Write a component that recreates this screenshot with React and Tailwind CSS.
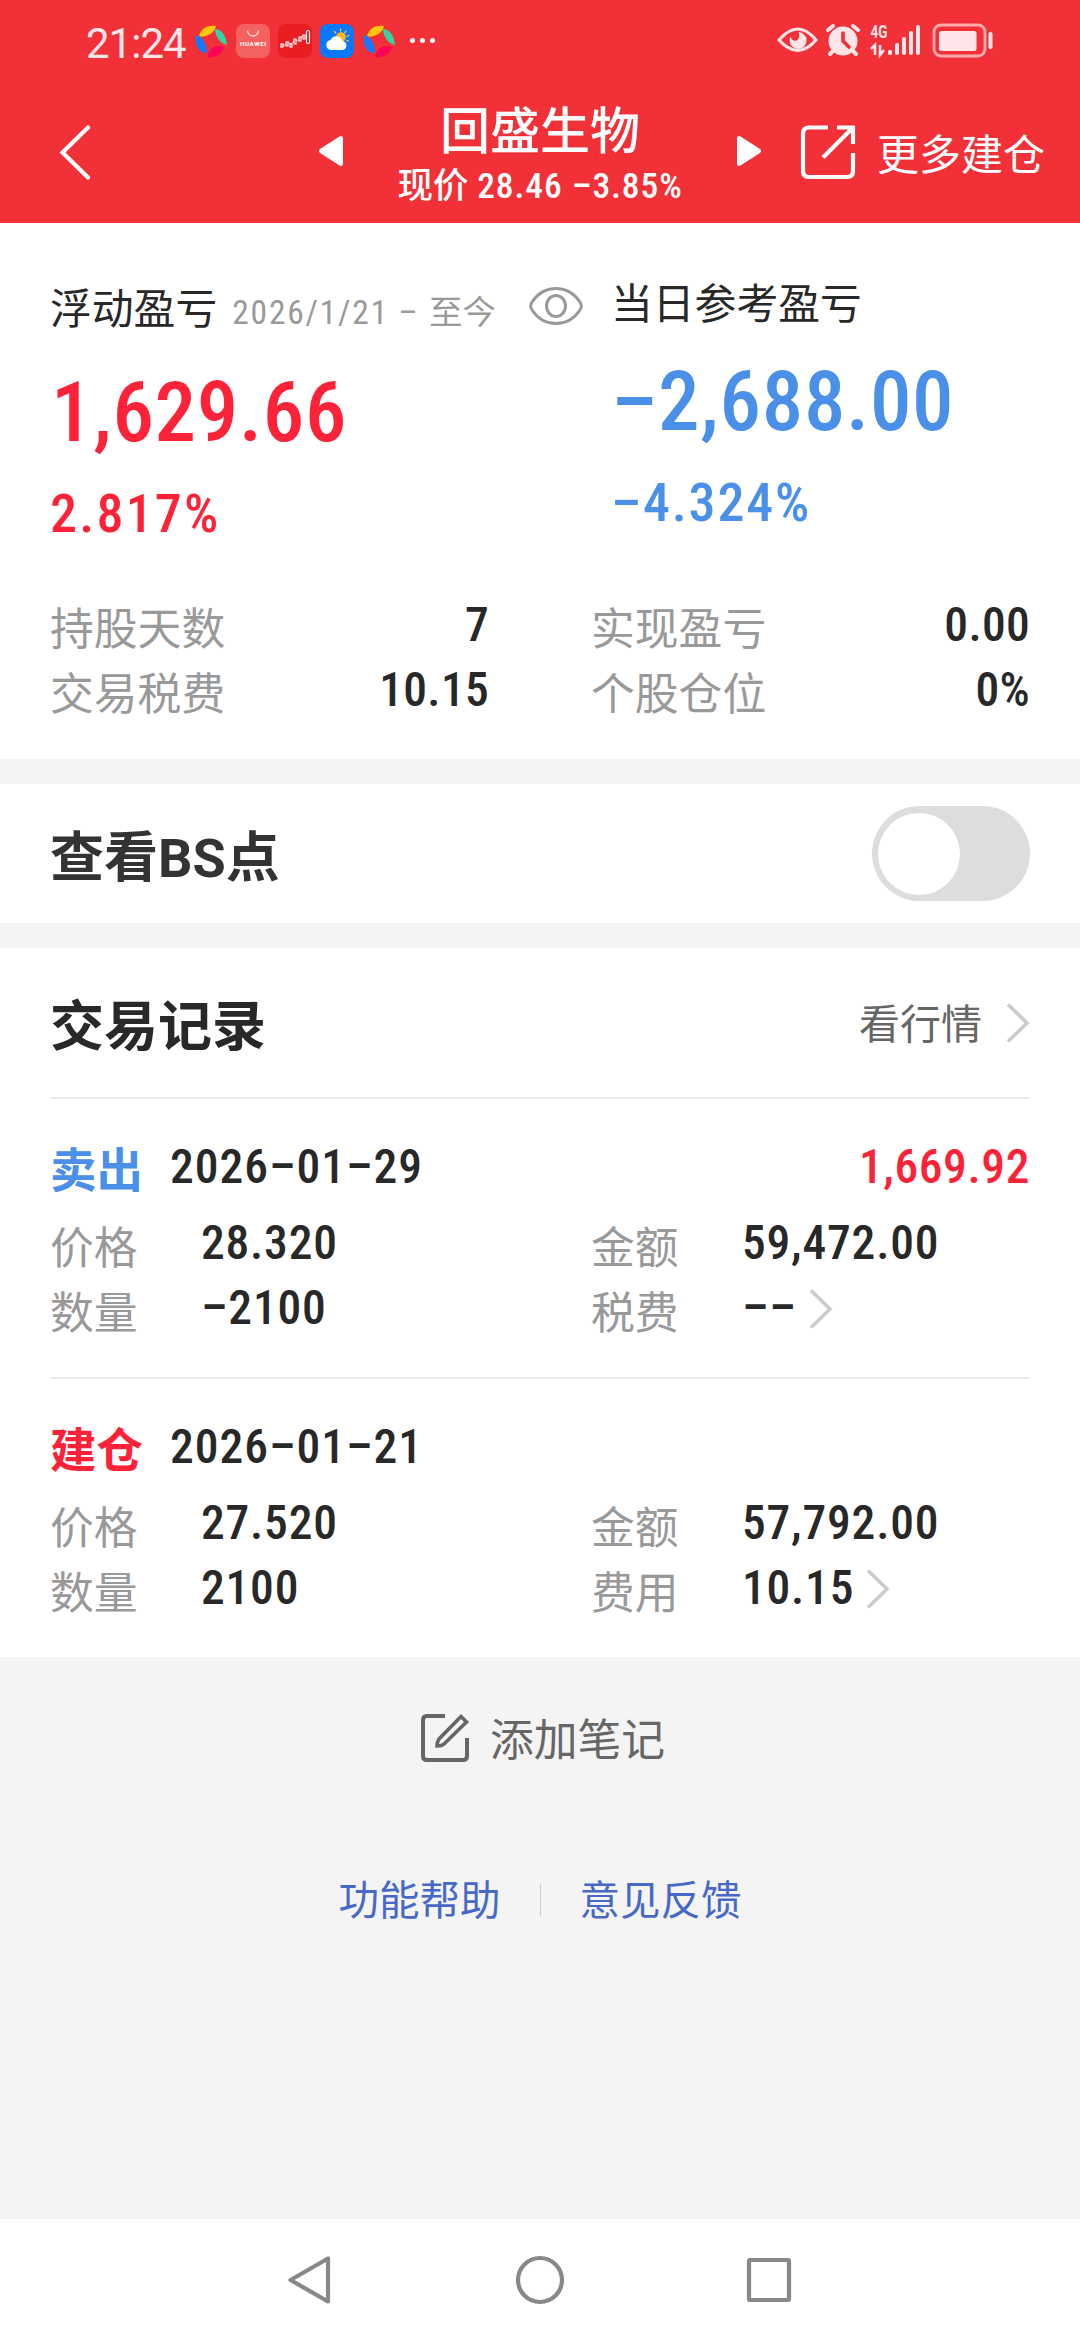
import clsx from 'clsx';

const records = [
    {
        id: 1,
        type: '卖出',
        color: 'text-[#4a90e8]',
        date: '2026–01–29',
        profit: '1,669.92',
        price: '28.320',
        amount: '59,472.00',
        count: '–2100',
        feeLabel: '税费',
        fee: '––',
    },
    {
        id: 2,
        type: '建仓',
        color: 'text-[#fc2338]',
        date: '2026–01–21',
        profit: '',
        price: '27.520',
        amount: '57,792.00',
        count: '2100',
        feeLabel: '费用',
        fee: '10.15',
    },
];

const Num = ({ className, children }) => (
    <span className={clsx('font-medium whitespace-nowrap [font-stretch:75%]', className)}>{children}</span>
);

const Chevron = ({ className }) => (
    <svg viewBox="0 0 24 40" className={clsx('h-10 w-6 shrink-0', className)} fill="none" stroke="#cbcbcb" strokeWidth="3.6">
        <path d="M2 1.5 21 20 2 38.5" />
    </svg>
);

const Pinwheel = () => (
    <svg viewBox="0 0 34 34" className="h-[34px] w-[34px]">
        <path d="M5 12C7 4 14 1 22 2c-1 5-5 8-10 10-3 1-5 1-7 0z" fill="#ffc60b" />
        <path d="M21 5c6 0 11 6 12 16-6-1-12-8-12-16z" fill="#36d3a4" />
        <path d="M30 24c-3 7-10 10-17 9 1-6 6-11 11-11 3 0 5 0 6 2z" fill="#fb0357" />
        <path d="M2 11c6 1 11 9 11 18-6 1-13-6-11-18z" fill="#1677ff" />
    </svg>
);

const StatusBar = () => (
    <div className="flex h-20 items-center pl-[86px]">
        <span className="w-[108px] pt-[7px] text-[42px] leading-none tracking-[-1px] text-[#ffe5e7]">21:24</span>
        <div className="flex items-center gap-2 pt-0.5">
            <Pinwheel />
            <svg viewBox="0 0 34 34" className="h-[34px] w-[34px]">
                <rect width="34" height="34" rx="8" fill="#f3625f" />
                <path d="M11.500 6.500a5.500 5.500 0 0 0 11 0" fill="none" stroke="#ffd9d6" strokeWidth="1.300" />
                <text x="17" y="22" textAnchor="middle" fontSize="6.200" fontWeight="700" fill="#fff" textLength="26">HUAWEI</text>
            </svg>
            <svg viewBox="0 0 34 34" className="h-[34px] w-[34px]">
                <rect width="34" height="34" rx="8" fill="#e81e22" />
                <path d="M2 23l5-2 3-3 3 2 4-4 4 1 3-5 4 2 2-3" fill="none" stroke="#ffc9c4" strokeWidth="1" />
                <g fill="#e81e22" stroke="#fff" strokeWidth="1.100">
                    <rect x="3" y="20" width="2" height="3" />
                    <rect x="8" y="18" width="2" height="4" />
                    <rect x="12" y="20" width="2" height="3" />
                    <rect x="16" y="15" width="2" height="5" />
                    <rect x="21" y="13" width="2" height="4" />
                    <rect x="25" y="11" width="2" height="4" />
                    <rect x="28.500" y="6.500" width="3" height="13" rx="1.500" />
                </g>
            </svg>
            <svg viewBox="0 0 34 34" className="h-[34px] w-[34px]">
                <rect width="34" height="34" rx="8" fill="#0a78fa" />
                <g stroke="#ffd23c" strokeWidth="1.200" strokeLinecap="round">
                    <path d="M20.500 5v2M14.500 7.500l1.300 1.600M26 7l-1.200 1.700M29 11.500l-2 .7M28.500 17l-1.600-.6" />
                </g>
                <circle cx="21" cy="13" r="4.800" fill="#ffb71c" />
                <path d="M11 26a5 5 0 0 1-.6-9.900 6.500 6.500 0 0 1 12.200 1A4.500 4.500 0 0 1 22.500 26z" fill="#fff" />
            </svg>
            <Pinwheel />
        </div>
        <div className="ml-[14px] flex gap-[5px]">
            <i className="h-[5px] w-[5px] rounded-full bg-white" />
            <i className="h-[5px] w-[5px] rounded-full bg-white" />
            <i className="h-[5px] w-[5px] rounded-full bg-white" />
        </div>
        <svg viewBox="0 0 220 40" className="mr-[86px] ml-auto h-10 w-[220px]" fill="#ffe5e7">
            {/* eye comfort */}
            <path d="M5 20Q24-2 42 20 24 41 5 20z" fill="none" stroke="#ffe5e7" strokeWidth="3.200" strokeLinejoin="round" />
            <path d="M24.500 12a8.500 8.500 0 1 1-8.900 8.200c0-1.500.3-2.900 1-4 .4 3 2.300 4.800 4.600 4.600 3.300-.3 5.200-4.300 3.300-8.800z" />
            {/* alarm */}
            <circle cx="69" cy="21" r="14.500" />
            <path d="M54 10l5-4M84 10l-5-4M59 31l-3 3M79 31l3 3" stroke="#ffe5e7" strokeWidth="4" strokeLinecap="round" />
            <path d="M69 13v8l6 6" fill="none" stroke="#f13037" strokeWidth="3.600" strokeLinecap="round" />
            <text x="96.500" y="18" fontSize="17.500" fontWeight="700" textLength="17" lengthAdjust="spacingAndGlyphs">4G</text>
            <path d="M97 29l4-4v10M106 25v10l4-5" fill="none" stroke="#ffe5e7" strokeWidth="2.600" />
            <rect x="114" y="30" width="4" height="5" rx="1.500" />
            <rect x="121" y="23" width="4" height="12" rx="2" />
            <rect x="128" y="17" width="4" height="18" rx="2" />
            <rect x="135" y="11" width="4" height="24" rx="2" />
            <rect x="142" y="5" width="4" height="30" rx="2" />
            <rect x="160" y="5" width="51" height="31" rx="7" fill="none" stroke="#ffabae" strokeWidth="2.800" />
            <rect x="165" y="11" width="37.500" height="20" rx="2.500" />
            <rect x="214.500" y="12" width="4" height="17" rx="2" />
        </svg>
    </div>
);

const Header = () => (
    <header className="h-[223px] bg-[#f13037] text-white">
        <StatusBar />
        <div className="flex h-[143px]">
            <svg viewBox="0 0 32 56" className="mt-[44px] ml-[59px] h-14 w-8" fill="none" stroke="currentColor" strokeWidth="4.200" strokeLinecap="round">
                <path d="M29 3.500 3.500 28.500 29 53.500" />
            </svg>
            <svg viewBox="0 0 24 30" className="mt-[56px] ml-[228px] h-[30px] w-6" fill="currentColor">
                <path d="M20.500.5Q24-1 24 3v24q0 4-3.500 2.500L1 17q-2-2 0-4z" />
            </svg>
            <div className="flex w-[394px] flex-col items-center pt-[24px]">
                <h1 className="text-[50px] leading-[56px] font-medium">回盛生物</h1>
                <p className="pt-[5px] text-[35.5px] leading-[42px] font-medium whitespace-nowrap">
                    现价 <Num className="tracking-[0.9px]">28.46 –3.85%</Num>
                </p>
            </div>
            <svg viewBox="0 0 24 30" className="mt-[56px] h-[30px] w-6" fill="currentColor">
                <path d="M3.500.5Q0-1 0 3v24q0 4 3.500 2.500L23 17q2-2 0-4z" />
            </svg>
            <svg viewBox="0 0 56 56" className="mt-[44px] ml-[39px] h-14 w-14" fill="none" stroke="currentColor" strokeWidth="4.200">
                <path d="M28 3.500H9Q3 3.500 3 9.500V47Q3 53 9 53H47Q53 53 53 47V29M37 3.500H53V20M53 3.500 23 33.500" />
            </svg>
            <span className="mt-[51px] ml-[21px] text-[42px] leading-[50px] whitespace-nowrap">更多建仓</span>
        </div>
    </header>
);

const Stat = ({ label, value }) => (
    <div className="flex h-[65px] justify-between">
        <span className="pt-[9px] text-[43.8px] leading-[50px] text-[#999]">{label}</span>
        <Num className="pt-1 text-[47.5px] leading-[50px] tracking-[0.3px]">{value}</Num>
    </div>
);

const Summary = () => (
    <section className="h-[536px] bg-white text-[#282828]">
        <div className="flex h-[373px]">
            <div className="w-[529px] pt-[60px] pl-[50px]">
                <div className="flex h-[54px] items-baseline whitespace-nowrap">
                    <span className="text-[41.8px] leading-[54px]">浮动盈亏</span>
                    <span className="ml-[15px] text-[33.5px] text-[#999]">
                        <span className="tracking-[1.800px] [font-stretch:75%]">2026/1/21 – </span>至今
                    </span>
                </div>
                <Num className="mt-[26px] block pl-px text-[83px] leading-[100px] tracking-[0.700px] text-[#fc2338]">1,629.66</Num>
                <Num className="mt-[21px] block text-[54px] leading-[60px] tracking-[2.200px] text-[#fc2338]">2.817%</Num>
            </div>
            <svg viewBox="0 0 54 40" className="mt-[63px] h-10 w-[54px]" fill="none" stroke="#999" strokeWidth="3">
                <path d="M3 16C15-2 39-2 51 16q2.500 4 0 8C39 42 15 42 3 24q-2.500-4 0-8z" />
                <ellipse cx="27" cy="20" rx="9.500" ry="10.500" />
            </svg>
            <div className="pt-[55px] pl-[28px]">
                <span className="block text-[41.8px] leading-[54px]">当日参考盈亏</span>
                <Num className="mt-[20px] block text-[83px] leading-[100px] tracking-[0.700px] text-[#4a90e8]">–2,688.00</Num>
                <Num className="mt-[21px] block text-[54px] leading-[60px] tracking-[1.800px] text-[#4a90e8]">–4.324%</Num>
            </div>
        </div>
        <div className="grid grid-cols-[439px_439px] gap-x-[102px] pl-[50px]">
            <Stat label="持股天数" value="7" />
            <Stat label="实现盈亏" value="0.00" />
            <Stat label="交易税费" value="10.15" />
            <Stat label="个股仓位" value="0%" />
        </div>
    </section>
);

const Field = ({ label, value, arrow }) => (
    <div className="flex h-[65px]">
        <span className="w-[151px] pt-[7px] text-[43.8px] leading-[50px] text-[#999]">{label}</span>
        <Num className="pt-px text-[47.5px] leading-[50px] tracking-[0.800px]">{value}</Num>
        {arrow && <Chevron className="mt-[7px] ml-3" />}
    </div>
);

const TradeRecord = ({ item }) => (
    <div className="mx-[50px] h-[280px] border-t-2 border-[#ededed] pt-[41px]">
        <div className="flex h-[77px]">
            <span className={clsx('w-[120px] pt-[3px] text-[46.5px] leading-[56px] font-bold', item.color)}>{item.type}</span>
            <Num className="text-[47.5px] leading-[54px] tracking-[1px]">{item.date}</Num>
            <Num className="ml-auto text-[47.5px] leading-[54px] tracking-[0.600px] text-[#fc2338]">{item.profit}</Num>
        </div>
        <div className="grid grid-cols-[541px_1fr]">
            <Field label="价格" value={item.price} />
            <Field label="金额" value={item.amount} />
            <Field label="数量" value={item.count} />
            <Field label={item.feeLabel} value={item.fee} arrow />
        </div>
    </div>
);

const NavBar = () => (
    <nav className="flex h-[121px] items-center justify-center bg-white">
        <svg viewBox="0 0 504 50" className="h-[50px] w-[504px]" fill="none" stroke="#888" strokeWidth="4.200" strokeLinejoin="round">
            <path d="M40 3.500V46.500L2.500 25z" />
            <circle cx="252" cy="25" r="22" />
            <rect x="461" y="5" width="40" height="40" rx="1" />
        </svg>
    </nav>
);

const App = () => {
    return (
        <div className="flex h-[2340px] w-[1080px] flex-col overflow-hidden bg-[#f4f4f4] font-[Roboto,'Noto_Sans_CJK_SC',sans-serif]">
            <Header />
            <Summary />

            <section className="mt-[25px] flex h-[139px] items-center justify-between bg-white px-[50px]">
                <h2 className="pt-[10px] text-[54px] leading-[64px] font-bold text-[#333]">查看BS点</h2>
                <button className="flex h-[95px] w-[158px] items-center rounded-full bg-[#ddd] pl-[6px]">
                    <i className="h-[82px] w-[82px] rounded-full bg-white" />
                </button>
            </section>

            <section className="mt-[25px] h-[709px] bg-white text-[#282828]">
                <div className="flex h-[149px] items-center px-[50px]">
                    <h2 className="pt-[10px] text-[54px] leading-[64px] font-bold">交易记录</h2>
                    <span className="ml-auto pt-1 text-[41px] leading-[50px] text-[#666]">看行情</span>
                    <Chevron className="ml-6" />
                </div>
                {records.map((item) => (
                    <TradeRecord key={item.id} item={item} />
                ))}
            </section>

            <div className="flex h-[162px] items-center justify-center pl-[5px] text-[#666]">
                <svg viewBox="0 0 50 50" className="h-[50px] w-[50px]" fill="none" stroke="currentColor" strokeWidth="4">
                    <path d="M25 3H7Q3 3 3 7V43Q3 47 7 47H43Q47 47 47 43V25" />
                    <path d="M41 3.500 46.500 9 24 31Q22 33 17 33 17 29 19 26z" strokeWidth="3.600" />
                </svg>
                <span className="ml-5 pt-[5px] text-[43.800px] leading-[50px]">添加笔记</span>
            </div>

            <div className="flex h-[162px] items-center justify-center text-[40.500px] leading-[50px] text-[#4669c8]">
                <span className="pt-0.5">功能帮助</span>
                <i className="mr-[39px] ml-[39px] h-8 w-px bg-[#ccc]" />
                <span className="pt-0.5">意见反馈</span>
            </div>

            <div className="grow" />
            <NavBar />
        </div>
    );
};

export default App;
